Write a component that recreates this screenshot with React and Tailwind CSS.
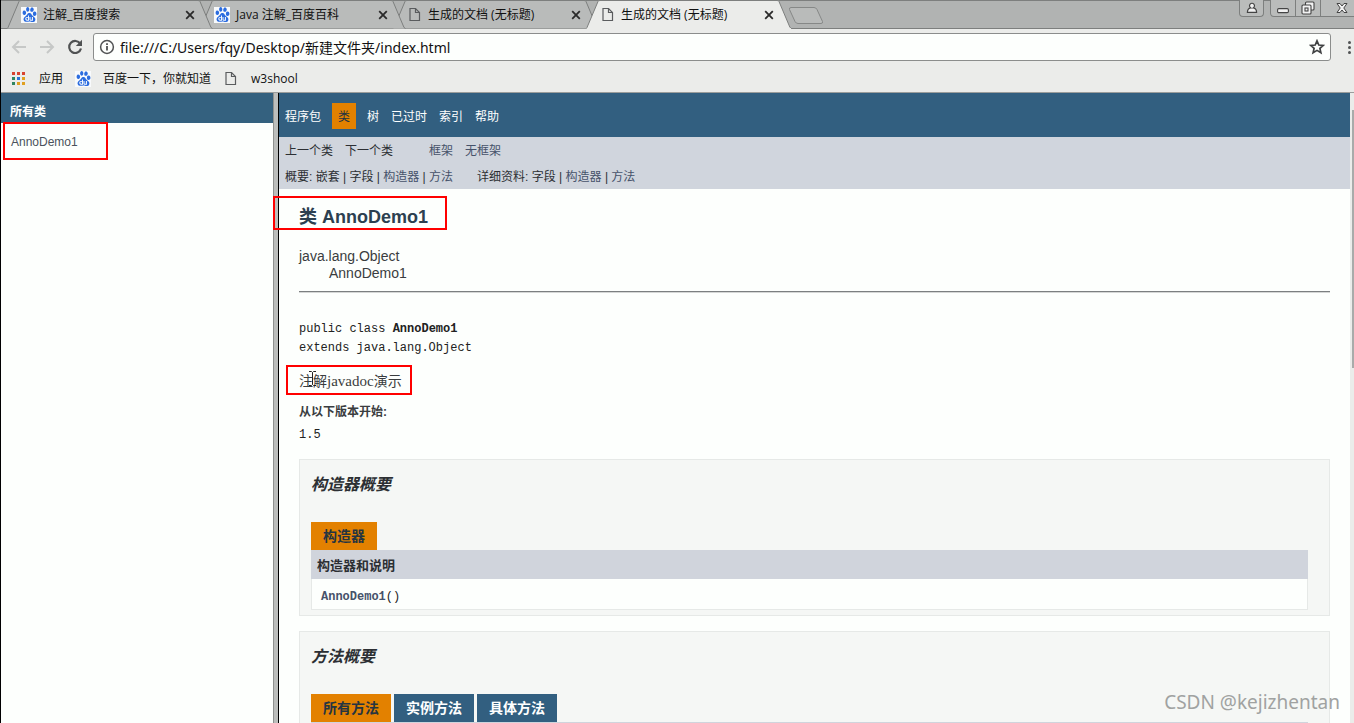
import React from 'react';
import { SiBaidu } from 'react-icons/si';

const TABS = [
  { id: 1, title: '注解_百度搜索', icon: 'baidu', order: 'z-40' },
  { id: 2, title: 'Java 注解_百度百科', icon: 'baidu', order: 'z-30' },
  { id: 3, title: '生成的文档 (无标题)', icon: 'page', order: 'z-20' },
  { id: 4, title: '生成的文档 (无标题)', icon: 'page', order: 'z-50', active: true },
];

const APP_COLORS = [
  'bg-[#d8432f]', 'bg-[#d8432f]', 'bg-[#d8432f]',
  'bg-[#2f8560]', 'bg-[#2a72d4]', 'bg-[#e0a020]',
  'bg-[#2f8560]', 'bg-[#e0a020]', 'bg-[#e0a020]',
];

const PageIcon = () => (
  <svg className="h-[15px] w-[15px] shrink-0" viewBox="0 0 15 15" fill="none" stroke="#5a5c5e" strokeWidth="1.2">
    <path d="M3 1.5h5.5L12.500 5.500v8H3z" />
    <path d="M8.500 1.500V5.500h4" />
  </svg>
);

const BaiduIcon = () => (
  <span className="flex h-[16px] w-[16px] shrink-0 items-center justify-center bg-[#f8fafc] text-[#2b6cdf]">
    <SiBaidu size={15} />
  </span>
);

const TabIcon = ({ icon }) => (icon === 'baidu' ? <BaiduIcon /> : <PageIcon />);

const Tab = ({ tab }) => (
  <div className={`relative h-[29px] w-[193px] shrink-0 ${tab.order}`}>
    <svg className="absolute top-0 left-0 h-[29px] w-[206px]" viewBox="0 0 206 29">
      <path
        d="M0 28.5 L1 27.5 L12 1.5 Q12.5 .5 14 .5 H191 Q192.5 .5 193 1.5 L204 27.5 L205.5 28.5"
        fill={tab.active ? '#ebecea' : '#b9bbba'}
        stroke="#7d7f7e"
      />
      {tab.active && <path d="M1 28.5H205" stroke="#ebecea" />}
    </svg>
    <div className="relative flex h-[29px] items-center pl-[14px]">
      <button className="flex grow items-center gap-[6px] text-left text-[12px] text-[#111]">
        <TabIcon icon={tab.icon} />
        <span className="whitespace-nowrap">{tab.title}</span>
      </button>
      <button aria-label="关闭标签页" className="mr-[5px] flex h-[10px] w-[10px] items-center justify-center">
        <svg className="h-[10px] w-[10px]" viewBox="0 0 10 10" stroke="#2a2a2a" strokeWidth="1.8">
          <path d="M1.2 1.2 8.8 8.8M8.8 1.2 1.2 8.8" />
        </svg>
      </button>
    </div>
  </div>
);

const WindowControls = () => (
  <div className="ml-auto flex h-[17px] items-stretch">
    <button aria-label="用户" className="mr-[6px] flex w-[25px] items-center justify-center rounded-b border border-t-0 border-[#7d7f7e] bg-[#babcbb]">
      <svg className="h-[12px] w-[12px]" viewBox="0 0 12 12" fill="#f2f2f2" stroke="#444" strokeWidth="1.2">
        <path d="M4.6 5.8A2.5 2.5 0 1 1 7.400 5.800C9.600 6.200 10.600 7.600 10.600 10.400H1.400C1.400 7.600 2.400 6.200 4.600 5.800z" />
      </svg>
    </button>
    <button aria-label="最小化" className="flex w-[26px] items-center justify-center rounded-bl border border-t-0 border-[#7d7f7e] bg-[#babcbb]">
      <svg className="h-[14px] w-[12px]" viewBox="0 0 12 14">
        <rect x=".6" y="7.6" width="10.8" height="4" rx="1.2" fill="#f2f2f2" stroke="#444" strokeWidth="1.1" />
      </svg>
    </button>
    <button aria-label="还原" className="flex w-[25px] items-center justify-center border-r border-b border-[#7d7f7e] bg-[#babcbb]">
      <svg className="h-[14px] w-[14px]" viewBox="0 0 14 14" fill="#f2f2f2" stroke="#444" strokeWidth="1.1">
        <rect x="4.5" y="1" width="8.5" height="8" rx="1" />
        <rect x="1" y="4" width="9" height="9" rx="1" />
        <rect x="4" y="7" width="3" height="3" />
      </svg>
    </button>
    <button aria-label="关闭" className="flex w-[33px] items-center justify-center border-b border-[#7d7f7e] bg-[#babcbb] pl-[8px]">
      <svg className="h-[12px] w-[12px]" viewBox="0 0 12 12" fill="#f2f2f2" stroke="#444" strokeWidth="1">
        <path d="M1 1.5h3L6 4l2-2.5h3L7.8 6 11 10.5H8L6 8l-2 2.5H1L4.2 6z" />
      </svg>
    </button>
  </div>
);

const TabStrip = () => (
  <div className="flex h-[29px] border-t border-b border-[#7d7f7e] bg-[#b1b3b2]">
    <div className="-mt-px flex h-[29px] grow pl-[6px]">
      {TABS.map((tab) => (
        <Tab key={tab.id} tab={tab} />
      ))}
      <button aria-label="新标签页" className="ml-[9px] flex h-[29px] items-center pt-[2px]">
        <svg className="h-[19px] w-[36px]" viewBox="0 0 36 19" fill="#b9bbba" stroke="#868887">
          <path d="M3 1.5H26Q28 1.5 29 3.5L34.5 15.5Q35 17.5 33 17.5H10Q8 17.5 7 15.5L1.5 3.5Q1 1.5 3 1.5z" />
        </svg>
      </button>
      <WindowControls />
    </div>
  </div>
);

const Toolbar = () => (
  <div className="flex h-[36px] items-center pl-[10px]">
    <button aria-label="后退" className="mr-[12px]">
      <svg className="h-[16px] w-[16px]" viewBox="0 0 16 16" fill="none" stroke="#c6c8c7" strokeWidth="2">
        <path d="M15 8H2.5M8 2 2 8l6 6" />
      </svg>
    </button>
    <button aria-label="前进" className="mr-[12px]">
      <svg className="h-[16px] w-[16px]" viewBox="0 0 16 16" fill="none" stroke="#c6c8c7" strokeWidth="2">
        <path d="M1 8h12.5M8 2l6 6-6 6" />
      </svg>
    </button>
    <button aria-label="重新加载" className="mr-[10px]">
      <svg className="h-[16px] w-[16px]" viewBox="0 0 16 16">
        <path d="M13.3 4.8A6 6 0 1 0 14 9.5" fill="none" stroke="#505253" strokeWidth="2.2" />
        <path d="M15 .8V7H8.8z" fill="#505253" />
      </svg>
    </button>
    <div className="flex h-[28px] grow items-center rounded-[3px] border border-[#8b8d8c] bg-[#fdfffd] px-[5px]">
      <svg className="mr-[5px] h-[16px] w-[16px] shrink-0" viewBox="0 0 16 16" fill="none" stroke="#505253" strokeWidth="1.5">
        <circle cx="8" cy="8" r="6.4" />
        <path d="M8 7v4.6M8 4.2v1.8" strokeWidth="1.8" />
      </svg>
      <input
        aria-label="地址"
        className="min-w-0 grow bg-transparent font-['Noto_Sans','Noto_Sans_CJK_SC',sans-serif] text-[14px] text-[#111] outline-none"
        defaultValue="file:///C:/Users/fqy/Desktop/新建文件夹/index.html"
      />
      <button aria-label="收藏">
        <svg className="h-[16px] w-[16px]" viewBox="0 0 16 16" fill="none" stroke="#3f4142" strokeWidth="1.7">
          <path d="M8 1.8 9.8 6l4.5.4-3.4 3 1 4.4L8 11.400l-3.900 2.400 1-4.400-3.400-3L6.200 6z" />
        </svg>
      </button>
    </div>
    <button aria-label="菜单" className="ml-[14px] flex w-[9px] shrink-0 flex-col items-center gap-[2px]">
      <span className="h-[3px] w-[3px] rounded-full bg-[#505253]" />
      <span className="h-[3px] w-[3px] rounded-full bg-[#505253]" />
      <span className="h-[3px] w-[3px] rounded-full bg-[#505253]" />
    </button>
  </div>
);

const Bookmarks = () => (
  <nav className="flex h-[28px] items-center border-b border-[#9b9d9c] pl-[11px] text-[12px] text-[#111]">
    <a href="#apps" className="mr-[12px] flex items-center gap-[14px]">
      <span className="grid grid-cols-3 gap-[2px]">
        {APP_COLORS.map((color, i) => (
          <span key={i} className={`h-[3px] w-[3px] ${color}`} />
        ))}
      </span>
      应用
    </a>
    <a href="#baidu" className="mr-[12px] flex items-center gap-[12px]">
      <BaiduIcon />
      百度一下，你就知道
    </a>
    <a href="#w3" className="flex items-center gap-[13px]">
      <PageIcon />
      w3shool
    </a>
  </nav>
);

const Sidebar = () => (
  <aside className="w-[272px] shrink-0 bg-[#fdfffd]">
    <h1 className="flex h-[30px] items-center bg-[#34617f] pt-[8px] pl-[9px] text-[12px] font-bold text-white">所有类</h1>
    <div className="relative px-[10px] py-[9px] text-[12px] leading-[20px]">
      <a href="#AnnoDemo1" className="text-[#4a525c]">AnnoDemo1</a>
      <div className="absolute -top-px left-[2px] h-[38px] w-[105px] border-2 border-[#ff0000]" />
    </div>
  </aside>
);

const NavLink = ({ children }) => (
  <a href="#nav" className="text-[#46526a]">{children}</a>
);

const DocNav = () => (
  <nav className="text-[12px] text-[#2c2f33]">
    <ul className="flex h-[44px] items-center bg-[#325f80] pt-[2px] pl-[6px] leading-[24px] text-white">
      <li className="mr-[11px] pt-[2px]"><a href="#pkg">程序包</a></li>
      <li className="mr-[11px] bg-[#e38100] px-[6px] pt-[2px] text-[#253441]">类</li>
      <li className="mr-[12px] pt-[2px]"><a href="#tree">树</a></li>
      <li className="mr-[12px] pt-[2px]"><a href="#deprecated">已过时</a></li>
      <li className="mr-[12px] pt-[2px]"><a href="#index">索引</a></li>
      <li className="pt-[2px]"><a href="#help">帮助</a></li>
    </ul>
    <div className="h-[52px] bg-[#d0d5dd] pt-px pl-[6px] leading-[26px]">
      <div className="flex gap-[12px]">
        <span>上一个类</span>
        <span className="mr-[24px]">下一个类</span>
        <NavLink>框架</NavLink>
        <NavLink>无框架</NavLink>
      </div>
      <div className="flex gap-[24px]">
        <div>概要: 嵌套 | 字段 | <NavLink>构造器</NavLink> | <NavLink>方法</NavLink></div>
        <div>详细资料: 字段 | <NavLink>构造器</NavLink> | <NavLink>方法</NavLink></div>
      </div>
    </div>
  </nav>
);

const Summary = ({ title, children }) => (
  <section className="mb-[15px] border border-[#e6e9e7] bg-[#f5f7f5] pr-[21px] pb-[5px] pl-[11px]">
    <h3 className="mb-[11px] h-[51px] pt-[13px] text-[16px] leading-[24px] font-bold text-[#2c2f33] italic">{title}</h3>
    {children}
  </section>
);

const ClassDoc = () => (
  <div className="px-[20px] text-[#3a3d40]">
    <div className="relative h-[47px] pt-[16px]">
      <h2 className="text-[18px] leading-[25px] font-bold text-[#2c4050]">类 AnnoDemo1</h2>
      <div className="absolute top-[7px] -left-[26px] h-[34px] w-[174px] border-2 border-[#ff0000]" />
    </div>
    <ul className="mt-[12px] text-[14px] leading-[17px]">
      <li>java.lang.Object</li>
      <li className="pl-[30px]">AnnoDemo1</li>
    </ul>
    <hr className="mt-[9px] h-[2px] border-t border-b border-t-[#7c7f81] border-b-[#d5d7d6]" />
    <pre className="mt-[27px] font-['Liberation_Mono','Noto_Sans_CJK_SC',monospace] text-[12px] leading-[19px] text-[#222]">
      public class <b>AnnoDemo1</b>{'\n'}extends java.lang.Object
    </pre>
    <div className="relative mt-[7px] h-[30px] font-['Liberation_Serif','Noto_Sans_CJK_SC',serif] text-[14px] leading-[32px]">
      注解<span className="text-[15px]">javadoc</span>演示
      <div className="absolute top-0 -left-[13px] h-[30px] w-[126px] border-2 border-[#ff0000]" />
      <svg className="absolute top-[5px] left-[9px] h-[17px] w-[9px]" viewBox="0 0 9 17" fill="none" stroke="#222">
        <path d="M1 1.5h2.5l1 1 1-1H8M4.5 2.5v12M1 15.5h2.5l1-1 1 1H8" />
      </svg>
    </div>
    <dl className="mt-[6px] text-[12px]">
      <dt className="leading-[22px] font-bold">从以下版本开始:</dt>
      <dd className="mb-[12px] font-['Liberation_Mono',monospace] leading-[24px] text-[#222]">1.5</dd>
    </dl>
    <Summary title="构造器概要">
      <table className="w-full table-fixed border-separate border-spacing-0 text-left">
        <caption className="text-left">
          <span className="block w-[66px] bg-[#e38100] text-center text-[14px] leading-[28px] font-bold text-[#253441]">构造器</span>
        </caption>
        <thead>
          <tr><th className="h-[29px] bg-[#d0d4dc] px-[6px] pt-[2px] text-[13px] font-bold text-[#2c2f33]">构造器和说明</th></tr>
        </thead>
        <tbody>
          <tr>
            <td className="h-[31px] border border-t-0 border-[#e6e9e7] bg-[#fdfffd] pt-[5px] pl-[9px] font-['Liberation_Mono',monospace] text-[12px] text-[#222]">
              <a href="#ctor" className="font-bold text-[#46526a]">AnnoDemo1</a>()
            </td>
          </tr>
        </tbody>
      </table>
    </Summary>
    <Summary title="方法概要">
      <div className="flex gap-[3px] text-[14px] leading-[28px] font-bold text-white">
        <button className="w-[80px] bg-[#e38100] text-[#253441]">所有方法</button>
        <button className="w-[80px] bg-[#325f80]">实例方法</button>
        <button className="w-[80px] bg-[#325f80]">具体方法</button>
      </div>
      <div className="h-[29px] bg-[#d0d4dc]" />
    </Summary>
  </div>
);

export default function App() {
  return (
    <div className="relative flex h-screen flex-col overflow-hidden border-l border-black bg-[#fdfffd] font-['Liberation_Sans','Noto_Sans_CJK_SC',sans-serif]">
      <header className="shrink-0 bg-[#ebecea] font-['Open_Sans','Noto_Sans_CJK_SC',sans-serif]">
        <TabStrip />
        <Toolbar />
        <Bookmarks />
      </header>
      <div className="flex min-h-0 grow">
        <Sidebar />
        <div className="w-[6px] shrink-0 border-r border-l border-r-black border-l-[#8f918f] bg-[#bcbebc]" />
        <main className="min-w-0 grow">
          <DocNav />
          <ClassDoc />
        </main>
        <div className="w-[4px] shrink-0 bg-[#ebecea] pt-[17px] pl-[2px]">
          <div className="h-[258px] bg-[#a9abaa]" />
        </div>
      </div>
      <div className="absolute right-[14px] bottom-[7px] z-50 font-['Noto_Sans',sans-serif] text-[19px] leading-[28px] text-[#a0a2a1]">
        CSDN @kejizhentan
      </div>
    </div>
  );
}
